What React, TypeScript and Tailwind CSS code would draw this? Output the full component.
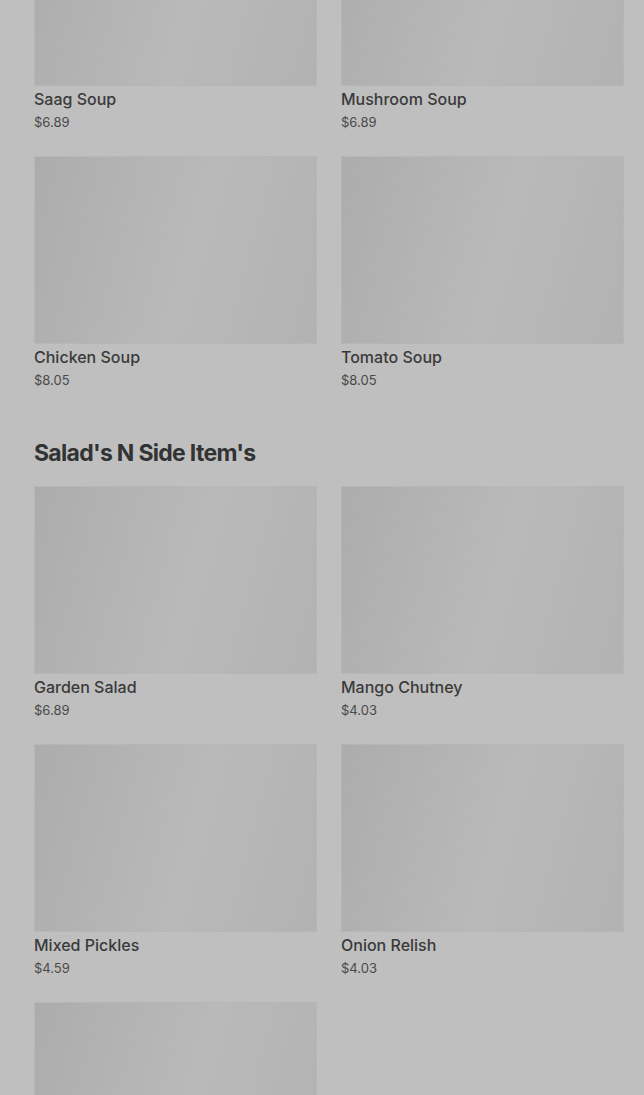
const soups = [
  { name: "Saag Soup", price: "$6.89" },
  { name: "Mushroom Soup", price: "$6.89" },
  { name: "Chicken Soup", price: "$8.05" },
  { name: "Tomato Soup", price: "$8.05" },
];

const sides = [
  { name: "Garden Salad", price: "$6.89" },
  { name: "Mango Chutney", price: "$4.03" },
  { name: "Mixed Pickles", price: "$4.59" },
  { name: "Onion Relish", price: "$4.03" },
];

function Thumb() {
  return <div className="h-[188px] bg-linear-[105deg] from-[#acacac] via-[#b9b9b9] via-55% to-[#b2b2b2] border border-[#b6b6b6]" />;
}

function Item({ name, price }: { name: string; price: string }) {
  return (
    <div>
      <Thumb />
      <div className="mt-[3px] text-[16px] leading-[20px] font-medium text-[#3a3a3a]">{name}</div>
      <div className="mt-[5px] text-[13px] leading-[16px] text-[#4a4a4a]">{price}</div>
    </div>
  );
}

export default function App() {
  return (
    <div className="h-[1095px] overflow-hidden bg-[#bfbfbf] font-['Inter',sans-serif]">
      <div className="-mt-[102px] pl-[34px] pr-[20px]">
        <div className="grid grid-cols-2 gap-x-6 gap-y-[26px]">
          {soups.map(s => <Item key={s.name} {...s} />)}
        </div>
        <h2 className="mt-[49px] mb-[17px] text-[23px] leading-[32px] font-bold tracking-[-0.7px] text-[#333]">Salad's N Side Item's</h2>
        <div className="grid grid-cols-2 gap-x-6 gap-y-[26px]">
          {sides.map(s => <Item key={s.name} {...s} />)}
          <div><Thumb /></div>
        </div>
      </div>
    </div>
  );
}
